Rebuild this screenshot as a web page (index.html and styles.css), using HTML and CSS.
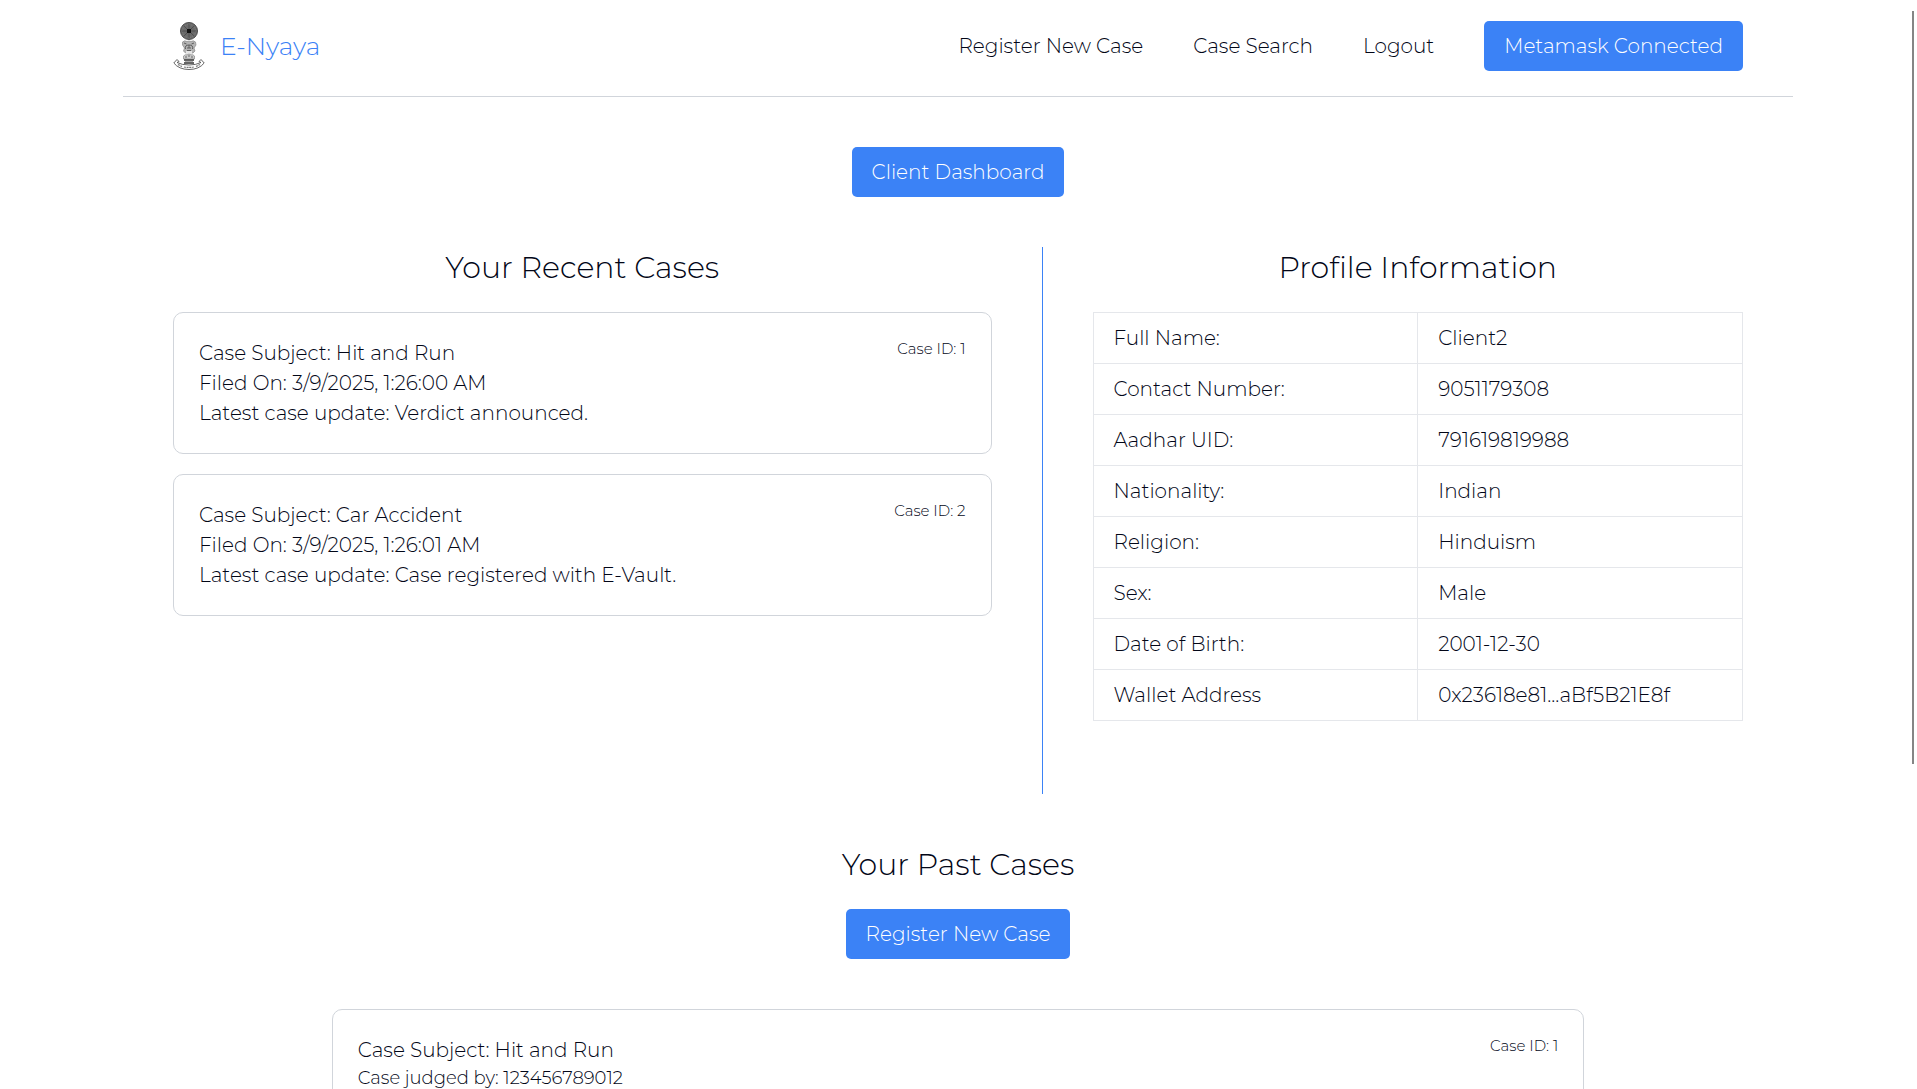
FILE: index.html
```html
<!DOCTYPE html>
<html lang="en">
<head>
<meta charset="utf-8">
<meta name="viewport" content="width=device-width, initial-scale=1">
<title>E-Nyaya</title>
<link rel="stylesheet" href="styles.css">
</head>
<body>
<div class="page">
  <header class="header">
    <a class="brand" href="#">
      <svg class="brand-logo" viewBox="0 0 32 48" aria-hidden="true">
        <circle cx="16" cy="9" r="8.5" fill="#6a6a6a" stroke="#4c4c4c"/>
        <circle cx="16" cy="9" r="6.5" fill="none" stroke="#808080" stroke-dasharray="1 1"/>
        <path d="M16 2v14M9 9h14M11 4l10 10M21 4L11 14" stroke="#444" stroke-width=".7"/>
        <rect x="14" y="7" width="4" height="4" fill="#111"/>
        <path d="M9.500 20q2-2 4.500-.5 2-1 4 0 2.500-1.500 4.500.5l.5 3-2 3 1 3-2 2H12.500l-2-2 1-3-2-3z" fill="#b4b4b4" stroke="#8a8a8a" stroke-width=".7"/>
        <path d="M11 21l2.500 1M18.500 22l2.500-1M12.500 27q-1-4 3.500-4t3.500 4M14 26h4M14 28.500h4M16 23v3" stroke="#555" stroke-width=".9" fill="none"/>
        <path d="M13 29h6v4h-6z" fill="#e4e4e4"/>
        <path d="M10.500 34q2-2 3.500-1 2-2 4 0 2-1 3.500 1v3h-11z" fill="#ccc" stroke="#888" stroke-width=".7"/>
        <path d="M12 35h2m1-1h2m1 1h2" stroke="#666"/>
        <path d="M11 38h10M11 41h10" stroke="#333" stroke-width="1.400"/>
        <path d="M12 39.500h8" stroke="#aaa"/>
        <path d="M4 37.500L.8 41Q6 47.500 16 47.500T31.200 41L28 37.500l-2 2 2 1Q23 43 16 43T4 40.500l2-1z" fill="#fff" stroke="#555" stroke-width=".9"/>
        <path d="M5 42.500l4 2M11 45q5 .8 10 0M23 44.500l4-2" stroke="#777" stroke-width="1.200" stroke-dasharray="2 .6" fill="none"/>
      </svg>
      <span>E-Nyaya</span>
    </a>
    <nav class="nav">
      <a href="#">Register New Case</a>
      <a href="#">Case Search</a>
      <a href="#">Logout</a>
      <button class="button" type="button">Metamask Connected</button>
    </nav>
  </header>

  <main>
    <div class="title-row">
      <button class="button" type="button">Client Dashboard</button>
    </div>

    <div class="overview">
      <section class="recent">
        <h2 class="heading">Your Recent Cases</h2>
        <div class="case-list">
          <article class="case">
            <div>
              <p>Case Subject: Hit and Run</p>
              <p>Filed On: 3/9/2025, 1:26:00 AM</p>
              <p>Latest case update: Verdict announced.</p>
            </div>
            <span class="case-id">Case ID: 1</span>
          </article>
          <article class="case">
            <div>
              <p>Case Subject: Car Accident</p>
              <p>Filed On: 3/9/2025, 1:26:01 AM</p>
              <p>Latest case update: Case registered with E-Vault.</p>
            </div>
            <span class="case-id">Case ID: 2</span>
          </article>
        </div>
      </section>

      <section class="profile">
        <h2 class="heading">Profile Information</h2>
        <table class="profile-table">
          <tbody>
            <tr><th scope="row">Full Name:</th><td>Client2</td></tr>
            <tr><th scope="row">Contact Number:</th><td>9051179308</td></tr>
            <tr><th scope="row">Aadhar UID:</th><td>791619819988</td></tr>
            <tr><th scope="row">Nationality:</th><td>Indian</td></tr>
            <tr><th scope="row">Religion:</th><td>Hinduism</td></tr>
            <tr><th scope="row">Sex:</th><td>Male</td></tr>
            <tr><th scope="row">Date of Birth:</th><td>2001-12-30</td></tr>
            <tr><th scope="row">Wallet Address</th><td>0x23618e81...aBf5B21E8f</td></tr>
          </tbody>
        </table>
      </section>
    </div>

    <section class="past">
      <h2 class="heading">Your Past Cases</h2>
      <button class="button" type="button">Register New Case</button>
      <article class="case past-case">
        <div>
          <p>Case Subject: Hit and Run</p>
          <p class="judge">Case judged by: 123456789012</p>
        </div>
        <span class="case-id">Case ID: 1</span>
      </article>
    </section>
  </main>
</div>
<div class="scroll-thumb"></div>
</body>
</html>
```
FILE: styles.css
```css
*, *::before, *::after {
  box-sizing: border-box;
}

html {
  height: 100%;
}

body {
  height: 100%;
  margin: 0;
  padding-right: 1px;
  overflow-x: hidden;
  overflow-y: auto;
  scrollbar-width: none;
  background: #fff;
  color: #020617;
  font-family: Montserrat, Inter, sans-serif;
  font-size: 20px;
  font-weight: 300;
  line-height: 30px;
}

h2, p {
  margin: 0;
}

a {
  color: inherit;
  text-decoration: none;
}

.page {
  max-width: 1670px;
  margin: 0 auto;
}

.header {
  display: flex;
  align-items: center;
  justify-content: space-between;
  padding: 21px 50px 25px;
  border-bottom: 1px solid #d1d5db;
}

.brand {
  display: flex;
  align-items: center;
  gap: 15px;
  color: #3b82f6;
  font-size: 25px;
}

.brand-logo {
  width: 32px;
  height: 48px;
}

.nav {
  display: flex;
  align-items: center;
  gap: 50px;
}

.button {
  height: 50px;
  padding: 0 20px;
  border: 0;
  border-radius: 5px;
  background: #3b82f6;
  color: #fff;
  font: inherit;
  cursor: pointer;
}

.title-row {
  display: flex;
  justify-content: center;
  padding: 50px 0;
}

.overview {
  display: flex;
  min-height: 547px;
}

.recent {
  width: 55%;
  padding: 0 50px;
}

.profile {
  width: 45%;
  padding: 0 50px;
  border-left: 1px solid #3b82f6;
}

.heading {
  margin-bottom: 23px;
  font-size: 30px;
  font-weight: 300;
  line-height: 42px;
  text-align: center;
}

.case-list {
  display: flex;
  flex-direction: column;
  gap: 20px;
}

.case {
  display: flex;
  justify-content: space-between;
  padding: 25px;
  border: 1px solid #d1d5db;
  border-radius: 10px;
}

.case-id {
  font-size: 15px;
  line-height: 22px;
}

.profile-table {
  width: 100%;
  border-collapse: collapse;
  table-layout: fixed;
}

.profile-table th,
.profile-table td {
  padding: 10px 20px;
  border: 1px solid #e5e7eb;
  font-weight: 300;
  text-align: left;
}

.past {
  display: flex;
  flex-direction: column;
  align-items: center;
  padding: 50px 0;
}

.past-case {
  width: 75%;
  margin-top: 50px;
}

.judge {
  font-size: 18px;
  line-height: 27px;
}

.scroll-thumb {
  position: fixed;
  top: 11px;
  right: 3px;
  width: 2px;
  height: 753px;
  background: #858585;
}
```
